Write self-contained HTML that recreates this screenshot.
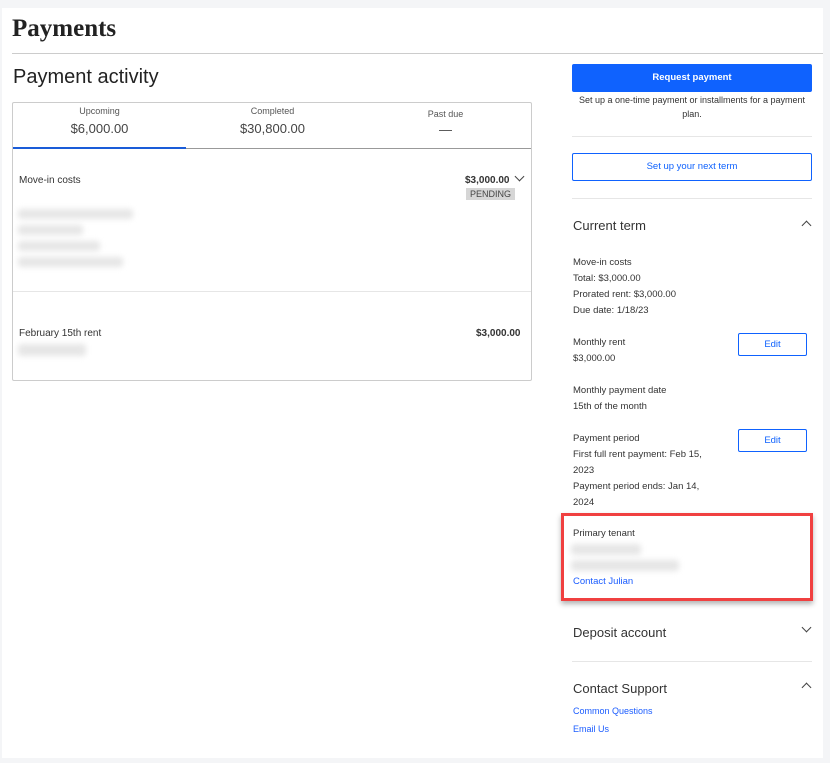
<!DOCTYPE html>
<html><head><meta charset="utf-8"><style>
*{margin:0;padding:0;box-sizing:border-box}
body{width:830px;height:763px;background:#f4f5f7;font-family:"Liberation Sans",sans-serif;position:relative;overflow:hidden;color:#333}
.main{position:absolute;left:2px;top:8px;width:821px;height:750px;background:#fff}
.a{position:absolute;white-space:nowrap}
.s{font-size:10px;color:#333}
.b{font-weight:bold}
.blue{color:#1a5cff}
.blur{position:absolute;background:#e6e6e6;filter:blur(3px);border-radius:3px}
.btn{position:absolute;border:1px solid #0f62fe;border-radius:2px;color:#0f62fe;font-size:9.5px;text-align:center;font-weight:bold}
.hr{position:absolute;height:1px;background:#e6e6e6}
.chev{position:absolute;width:7px;height:7px;border-left:1.2px solid #444;border-top:1.2px solid #444}
</style></head><body>
<div class="main"></div>
<div class="a" style="left:12px;top:15px;font-family:'Liberation Serif',serif;font-size:25px;font-weight:bold;color:#222">Payments</div>
<div class="hr" style="left:12px;top:53px;width:811px;background:#ccc"></div>
<div class="a" style="left:13px;top:66px;font-size:20px;color:#222">Payment activity</div>

<div style="position:absolute;left:12px;top:102px;width:520px;height:279px;border:1px solid #ccc;border-radius:2px"></div>
<div class="hr" style="left:13px;top:148px;width:518px;background:#999"></div>
<div style="position:absolute;left:13px;top:147px;width:173px;height:2px;background:#1a5cd8"></div>
<div class="a s" style="left:13px;width:173px;text-align:center;top:106px;font-size:9px;color:#555">Upcoming</div>
<div class="a" style="left:13px;width:173px;text-align:center;top:121px;font-size:13px;color:#444">$6,000.00</div>
<div class="a s" style="left:186px;width:173px;text-align:center;top:106px;font-size:9px;color:#555">Completed</div>
<div class="a" style="left:186px;width:173px;text-align:center;top:121px;font-size:13px;color:#444">$30,800.00</div>
<div class="a s" style="left:359px;width:173px;text-align:center;top:109px;font-size:9px;color:#555">Past due</div>
<div class="a" style="left:359px;width:173px;text-align:center;top:122px;font-size:13px;color:#444">—</div>

<div class="a s" style="left:19px;top:175px">Move-in costs</div>
<div class="a s b" style="left:465px;top:175px">$3,000.00</div>
<div class="chev" style="left:516px;top:173px;transform:rotate(225deg)"></div>
<div class="a" style="left:466px;top:188px;background:#d6d6d6;font-size:9px;padding:0 4px;line-height:12px;color:#444">PENDING</div>
<div class="blur" style="left:18px;top:209px;width:115px;height:10px"></div>
<div class="blur" style="left:18px;top:225px;width:65px;height:10px"></div>
<div class="blur" style="left:18px;top:241px;width:82px;height:10px"></div>
<div class="blur" style="left:18px;top:257px;width:105px;height:10px"></div>
<div class="hr" style="left:13px;top:291px;width:518px"></div>
<div class="a s" style="left:19px;top:328px">February 15th rent</div>
<div class="a s b" style="left:476px;top:328px">$3,000.00</div>
<div class="blur" style="left:18px;top:344px;width:68px;height:12px"></div>

<div style="position:absolute;left:572px;top:64px;width:240px;height:28px;background:#0f62fe;border-radius:2px;color:#fff;font-size:9.5px;font-weight:bold;text-align:center;line-height:28px">Request payment</div>
<div class="a" style="left:572px;width:240px;text-align:center;top:93px;font-size:9px;line-height:14px;white-space:normal;color:#333">Set up a one-time payment or installments for a payment plan.</div>
<div class="hr" style="left:572px;top:136px;width:240px"></div>
<div class="btn" style="left:572px;top:153px;width:240px;height:28px;line-height:26px;font-weight:normal">Set up your next term</div>
<div class="hr" style="left:572px;top:198px;width:240px"></div>
<div class="a" style="left:573px;top:218px;font-size:13px;color:#333">Current term</div>
<div class="chev" style="left:803px;top:222px;transform:rotate(45deg)"></div>
<div style="position:absolute;left:573px;top:255px;font-size:9.5px;line-height:16px;color:#333">
Move-in costs<br>Total: $3,000.00<br>Prorated rent: $3,000.00<br>Due date: 1/18/23</div>
<div style="position:absolute;left:573px;top:335px;font-size:9.5px;line-height:16px">Monthly rent<br>$3,000.00</div>
<div class="btn" style="left:738px;top:333px;width:69px;height:23px;line-height:21px;font-weight:normal">Edit</div>
<div style="position:absolute;left:573px;top:383px;font-size:9.5px;line-height:16px">Monthly payment date<br>15th of the month</div>
<div style="position:absolute;left:573px;top:431px;font-size:9.5px;line-height:16px">Payment period<br>First full rent payment: Feb 15,<br>2023<br>Payment period ends: Jan 14,<br>2024</div>
<div class="btn" style="left:738px;top:429px;width:69px;height:23px;line-height:21px;font-weight:normal">Edit</div>

<div style="position:absolute;left:561px;top:513px;width:252px;height:88px;border:3px solid #f04040;box-shadow:0 3px 5px rgba(0,0,0,.3)"></div>
<div class="a" style="left:573px;top:528px;font-size:9.5px">Primary tenant</div>
<div class="blur" style="left:571px;top:544px;width:70px;height:11px"></div>
<div class="blur" style="left:571px;top:560px;width:108px;height:11px"></div>
<div class="a blue" style="left:573px;top:576px;font-size:9.5px">Contact Julian</div>

<div class="a" style="left:573px;top:625px;font-size:13px">Deposit account</div>
<div class="chev" style="left:803px;top:624px;transform:rotate(225deg)"></div>
<div class="hr" style="left:572px;top:661px;width:240px"></div>
<div class="a" style="left:573px;top:681px;font-size:13px">Contact Support</div>
<div class="chev" style="left:803px;top:684px;transform:rotate(45deg)"></div>
<div class="a blue" style="left:573px;top:706px;font-size:9px">Common Questions</div>
<div class="a blue" style="left:573px;top:724px;font-size:9px">Email Us</div>
</body></html>
